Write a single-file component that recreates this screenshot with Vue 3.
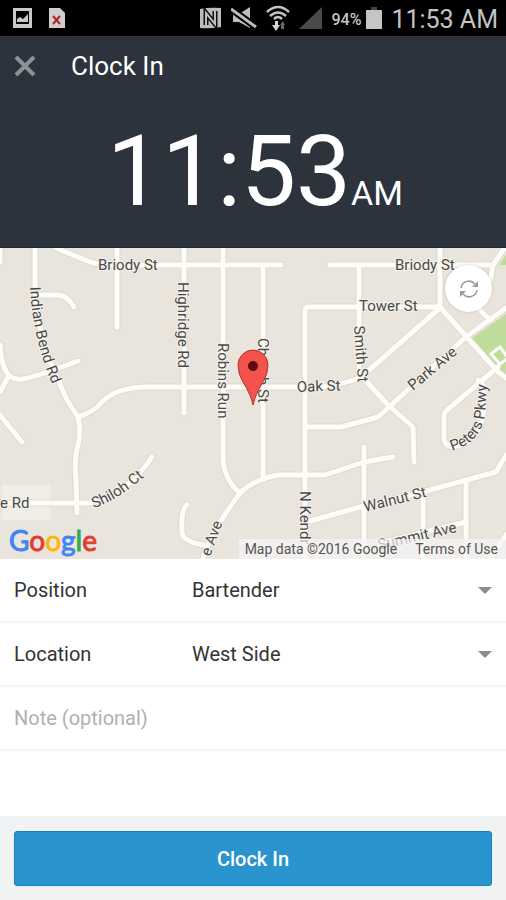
<template>
  <div class="screen">
    <header class="header">
      <div class="status-bar">
        <svg width="19" height="22" viewBox="0 0 19 22">
          <path d="M0 1h19v20H0zM3 4v13h13V4z" fill="#c9c9c9" fill-rule="evenodd" />
          <path d="M4 15v-3l3-2 3 2 5-5v8z" fill="#c9c9c9" />
        </svg>
        <svg class="file-icon" width="18" height="22" viewBox="0 0 18 22">
          <path d="M1 1h11l5 5v15H1z" fill="#d0cecd" />
          <path d="M5 9l7 8M12 9l-7 8" stroke="#b3202a" stroke-width="2" />
        </svg>
        <div class="status-right">
          <svg width="23" height="22" viewBox="0 0 23 22">
            <path d="M1 2Q11 0 22 1V20Q12 22 1 21z" fill="#bdbdbd" />
            <path d="M7 18V6l9 11V4" fill="none" stroke="#111" stroke-width="5" />
            <path d="M7 19V6l9 11V3" fill="none" stroke="#bdbdbd" stroke-width="2" />
          </svg>
          <svg width="26" height="22" viewBox="0 0 26 22">
            <path d="M2 7h6l11-7v21L8 15H2z" fill="#bdbdbd" />
            <path d="M0 2l25 18" stroke="#000" stroke-width="7" />
            <path d="M0 2l25 18" stroke="#bdbdbd" stroke-width="3" />
          </svg>
          <svg width="24" height="26" viewBox="0 0 24 26">
            <g fill="none" stroke="#c4c4c4" stroke-width="2.5">
              <path d="M1 7Q12 -3 23 7" />
              <path d="M4 11Q12 4 20 11" />
              <path d="M8 14Q12 10 16 14" />
            </g>
            <path d="M9 16h3v4h2l-4 6-4-6h3z" fill="#d5d5d5" />
            <path d="M15 24v-4h-1l3-4 2 4h-1v4z" fill="#666" />
          </svg>
          <svg width="23" height="22" viewBox="0 0 23 22">
            <path d="M0 22L23 0v22z" fill="#4b4b4b" />
          </svg>
          <span class="battery-level">94%</span>
          <svg width="16" height="22" viewBox="0 0 16 22">
            <path d="M5 0h6v3H5z" fill="#444" />
            <path d="M0 3h16v19H0z" fill="#c5c5c5" />
          </svg>
          <span class="status-time">11:53 AM</span>
        </div>
      </div>

      <div class="app-bar">
        <button class="close-btn" type="button" aria-label="Close">
          <svg width="22" height="22" viewBox="0 0 22 22">
            <path d="M2 2l18 18M20 2L2 20" stroke="#8b9298" stroke-width="4" />
          </svg>
        </button>
        <h1 class="title">Clock In</h1>
      </div>

      <div class="clock">
        <span class="clock-time">11:53</span>
        <span class="clock-period">AM</span>
      </div>
    </header>

    <section class="map">
      <svg class="map-canvas" viewBox="0 0 506 311" preserveAspectRatio="xMidYMid slice">
        <defs>
          <path v-for="label in curvedLabels" :id="label.id" :key="label.id" :d="label.path" />
        </defs>
        <!-- parks and blocks -->
        <path d="M472 90L506 66V126L497 119z" fill="#bfdc9b" />
        <path d="M499 17L506 7v10z" fill="#bfdc9b" />
        <path d="M2 237h48v35H2z" fill="#f0ede6" />

        <g class="road-edge">
          <path v-for="(d, i) in roads" :key="i" :d="d" />
        </g>
        <g class="road">
          <path v-for="(d, i) in roads" :key="i" :d="d" />
        </g>
        <path d="M491 106l9-7 8 11-8 6z" fill="none" stroke="#fdfcf8" stroke-width="3" />

        <g class="street">
          <text
            v-for="label in labels"
            :key="label.text + label.x"
            :transform="`translate(${label.x} ${label.y}) rotate(${label.angle})`"
          >{{ label.text }}</text>
          <text v-for="label in curvedLabels" :key="label.id">
            <textPath :href="'#' + label.id">{{ label.text }}</textPath>
          </text>
        </g>

        <!-- current position marker -->
        <path
          d="M253 157Q251 147 243 134Q238 126 238 117a15 15 0 0 1 30 0Q268 126 263 134Q255 147 253 157z"
          fill="#f4524d"
          stroke="#b5302c"
        />
        <circle cx="253" cy="118" r="5" fill="#5a0e0c" />
      </svg>

      <button class="refresh-btn" type="button" aria-label="Refresh location">
        <svg width="24" height="24" viewBox="0 0 24 24">
          <path d="M4 11A8 8 0 0 1 18 7M20 13A8 8 0 0 1 6 17" fill="none" stroke="#999" stroke-width="1.5" />
          <path d="M21 4v6h-6zM3 20v-6h6z" fill="#999" />
        </svg>
      </button>

      <div class="google-logo">
        <span class="blue">G</span><span class="red">o</span><span class="yellow">o</span><span class="blue">g</span><span class="green">l</span><span class="red">e</span>
      </div>
      <div class="attribution">
        <span>Map data ©2016 Google</span>
        <a href="#">Terms of Use</a>
      </div>
    </section>

    <form class="form" @submit.prevent>
      <div class="row">
        <label for="position">Position</label>
        <select id="position" v-model="position">
          <option>Bartender</option>
        </select>
        <span class="caret"></span>
      </div>
      <div class="row">
        <label for="location">Location</label>
        <select id="location" v-model="location">
          <option>West Side</option>
        </select>
        <span class="caret"></span>
      </div>
      <div class="row">
        <input v-model="note" type="text" placeholder="Note (optional)" aria-label="Note (optional)" />
      </div>
      <div class="form-footer">
        <button class="submit-btn" type="submit">Clock In</button>
      </div>
    </form>
  </div>
</template>

<script setup>
import { ref } from 'vue'

const position = ref('Bartender')
const location = ref('West Side')
const note = ref('')

// street geometry
const roads = [
  'M0 0V14',
  'M35 0V40Q38 85 52 118L67 152L78 169Q82 184 77 201Q74 214 76 230L77 265',
  'M37 47H58Q67 47 74 59',
  'M56 0L90 14Q98 17 117 17H281',
  'M117 0V79',
  'M184 0V165',
  'M223 0V210Q224 232 240 245',
  'M0 97Q2 134 22 131Q30 131 78 113',
  'M8 129L0 144',
  'M0 167L22 194',
  'M78 169Q94 164 102 154Q117 139 147 139H320Q340 137 360 130L441 59',
  'M330 17H493L506 -2',
  'M493 17L490 34',
  'M359 17V125L387 156L413 179L414 214',
  'M305 311V62Q305 59 309 59H441',
  'M440 0V59L498 124L506 130',
  'M480 62L490 72',
  'M506 60L466 89L378 169L341 179H305',
  'M498 119L447 162Q444 164 444 170V189Q444 205 468 194Q488 180 483 137L478 132',
  'M263 17V229',
  'M203 311Q207 290 240 245Q253 232 278 227H325L364 214L393 209',
  'M364 199V311',
  'M306 274L364 258L426 243L496 224L506 207',
  'M423 245V311',
  'M466 234V311',
  'M380 295L466 274',
  'M506 287L490 311',
  'M187 257Q181 260 182 285Q183 293 203 297',
  'M0 255H90Q128 246 152 209',
]

const labels = [
  { text: 'Briody St', x: 98, y: 22, angle: 0 },
  { text: 'Briody St', x: 395, y: 22, angle: 0 },
  { text: 'Tower St', x: 359, y: 63, angle: 0 },
  { text: 'Oak St', x: 297, y: 144, angle: -2 },
  { text: 'Highridge Rd', x: 178, y: 34, angle: 90 },
  { text: 'Robins Run', x: 218, y: 95, angle: 90 },
  { text: 'Church St', x: 258, y: 90, angle: 90 },
  { text: 'Smith St', x: 354, y: 78, angle: 86 },
  { text: 'Park Ave', x: 413, y: 143, angle: -40 },
  { text: 'N Kendr', x: 300, y: 243, angle: 90 },
  { text: 'Walnut St', x: 365, y: 264, angle: -14 },
  { text: 'Summit Ave', x: 379, y: 302, angle: -13 },
  { text: 'e Rd', x: 0, y: 260, angle: 0 },
  { text: 'e Ave', x: 210, y: 309, angle: -70 },
]

const curvedLabels = [
  { id: 'indian-bend', text: 'Indian Bend Rd', path: 'M30 39Q32 85 50 131L66 170' },
  { id: 'shiloh', text: 'Shiloh Ct', path: 'M94 260Q120 252 154 220' },
  { id: 'peters', text: 'Peters Pkwy', path: 'M452 203Q482 194 485 165Q486 150 488 120' },
]
</script>

<style>
body {
  margin: 0;
}
</style>

<style scoped>
.screen {
  display: flex;
  flex-direction: column;
  min-height: 100vh;
  background: #fff;
  font-family: Roboto, sans-serif;
  color: #333;
}

button {
  padding: 0;
  border: none;
  font-family: inherit;
  cursor: pointer;
}

.header {
  box-sizing: border-box;
  height: 248px;
  border-bottom: 1px solid #1d2c36;
  background: #2c333d;
  color: #fff;
}

.status-bar {
  display: flex;
  align-items: center;
  height: 36px;
  padding: 0 8px 0 13px;
  background: #000;
  color: #c4c4c4;
}

.status-bar svg {
  flex-shrink: 0;
}

.file-icon {
  margin-left: 16px;
}

.status-right {
  display: flex;
  align-items: center;
  gap: 9px;
  margin-left: auto;
}

.battery-level {
  margin-right: -4px;
  padding-top: 2px;
  font-size: 16px;
  font-weight: 500;
}

.status-time {
  padding-top: 4px;
  font-size: 25px;
  line-height: 32px;
}

.app-bar {
  display: flex;
  align-items: center;
  gap: 35px;
  height: 60px;
  padding: 0 14px;
}

.close-btn {
  display: flex;
  background: none;
}

.title {
  margin: 0;
  font-size: 26px;
  font-weight: 400;
}

.clock {
  display: flex;
  justify-content: center;
  align-items: baseline;
  padding: 18px 0 0 4px;
  line-height: 116px;
}

.clock-time {
  font-size: 98px;
}

.clock-period {
  font-size: 34px;
}

.map {
  position: relative;
  height: 311px;
  overflow: hidden;
  background: #e9e5dc;
}

.map-canvas {
  display: block;
  width: 100%;
  height: 100%;
}

.road-edge,
.road {
  fill: none;
  stroke-linecap: round;
  stroke-linejoin: round;
}

.road-edge {
  stroke: #dfdad0;
  stroke-width: 7px;
}

.road {
  stroke: #fdfcf8;
  stroke-width: 5px;
}

.street {
  fill: #4a4a4a;
  stroke: #f4f1ea;
  stroke-width: 2px;
  paint-order: stroke;
  font-size: 15px;
}

.refresh-btn {
  position: absolute;
  top: 17px;
  right: 14px;
  display: flex;
  align-items: center;
  justify-content: center;
  width: 47px;
  height: 47px;
  border-radius: 50%;
  background: #fff;
  box-shadow: 0 0 3px rgba(0, 0, 0, 0.2);
}

.google-logo {
  position: absolute;
  bottom: 3px;
  left: 9px;
  font-family: Lato, sans-serif;
  font-size: 28px;
  line-height: 32px;
  text-shadow: 0 0 2px #fff;
  -webkit-text-stroke: 1px currentColor;
}

.blue {
  color: #4285f4;
}

.red {
  color: #e0402f;
}

.yellow {
  color: #f9b90a;
}

.green {
  color: #34a853;
}

.attribution {
  position: absolute;
  right: 0;
  bottom: 0;
  display: flex;
  gap: 18px;
  padding: 0 8px 0 6px;
  background: rgba(245, 245, 245, 0.7);
  font-size: 14px;
  line-height: 20px;
  color: #555;
}

.attribution a {
  color: inherit;
  text-decoration: none;
}

.form {
  display: flex;
  flex: 1;
  flex-direction: column;
}

.row {
  display: flex;
  align-items: center;
  box-sizing: border-box;
  height: 64px;
  padding: 0 14px;
  border-bottom: 2px solid #f5f5f5;
  font-size: 20px;
}

.row label {
  width: 178px;
}

.row select,
.row input {
  flex: 1;
  min-width: 0;
  padding: 0;
  border: none;
  outline: none;
  background: none;
  appearance: none;
  font: inherit;
  color: inherit;
}

.row input::placeholder {
  color: #b0b0b0;
}

.caret {
  border: 7px solid transparent;
  border-top-color: #8c8c8c;
  border-bottom: none;
  pointer-events: none;
}

.form-footer {
  margin-top: auto;
  padding: 15px 14px 14px;
  background: #f0f2f4;
}

.submit-btn {
  width: 100%;
  height: 55px;
  border: 1px solid #1583c2;
  border-radius: 3px;
  background: #2994ce;
  color: #fff;
  font-size: 20px;
  font-weight: 500;
}
</style>
